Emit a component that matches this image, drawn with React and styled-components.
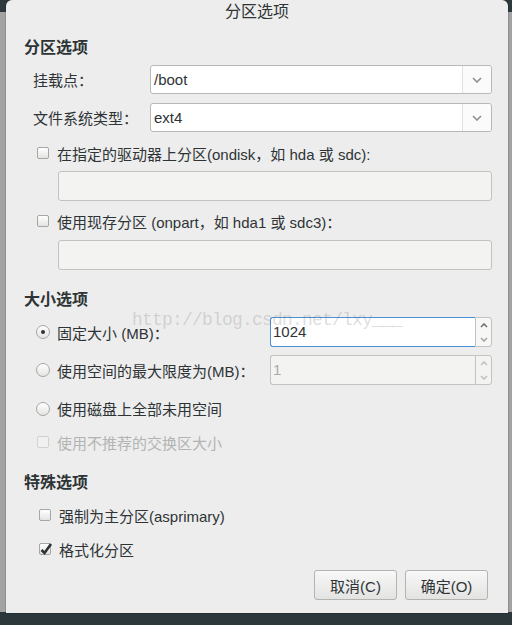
import styled, { createGlobalStyle } from "styled-components"

const colors = {
  text: "#2e3436",
  muted: "#b2b4b3",
  dialog: "#ededed",
  border: "#b8b8b5",
  focus: "#4a90d9"
}

const GlobalStyle = createGlobalStyle`
  body {
    margin: 0;
    font-family: "Liberation Sans", "Noto Sans CJK SC", sans-serif;
    font-size: 15px;
    color: ${colors.text};
  }
`

const Screen = styled.div`
  width: 512px;
  height: 625px;
  overflow: hidden;
  box-sizing: border-box;
  padding-left: 6px;
  background: linear-gradient(
    to bottom,
    #2c3a3d 0,
    #2c3a3d 12px,
    #a3a3a3 12px,
    #a3a3a3 612px,
    #2b373a 612px
  );
`

const Dialog = styled.div`
  width: 502px;
  height: 613px;
  display: flex;
  flex-direction: column;
  background: ${colors.dialog};
  border-radius: 6px 6px 0 0;
  box-shadow: 0 0 0 1px rgba(0, 0, 0, 0.12);
`

const TitleBar = styled.div`
  height: 24px;
  line-height: 24px;
  text-align: center;
  font-size: 16px;
`

const Body = styled.div`
  display: flex;
  flex-direction: column;
  padding: 14px 16px 13px 18px;
`

const Heading = styled.div`
  height: 20px;
  line-height: 20px;
  font-size: 16px;
  font-weight: bold;
  margin-top: ${(p) => p.$top || 0}px;
`

const FieldRow = styled.div`
  display: grid;
  grid-template-columns: 126px 1fr;
  align-items: center;
  margin-top: ${(p) => p.$top}px;

  label {
    padding-left: 9px;
  }
`

const Combo = styled.div`
  height: 29px;
  box-sizing: border-box;
  display: flex;
  border: 1px solid ${colors.border};
  border-radius: 3px;
  background: #fff;
`

const ComboText = styled.div`
  flex: 1;
  padding-left: 3px;
  line-height: 27px;
`

const ComboButton = styled.div`
  width: 28px;
  display: flex;
  align-items: center;
  justify-content: center;
  border-left: 1px solid #e2e2e0;
  background: #fbfbfb;
  border-radius: 0 3px 3px 0;
`

const CheckRow = styled.div`
  height: 20px;
  display: flex;
  align-items: center;
  gap: 8px;
  padding-left: ${(p) => p.$indent || 13}px;
  margin-top: ${(p) => p.$top}px;
  color: ${(p) => (p.$disabled ? colors.muted : colors.text)};
`

const Box = styled.span`
  position: relative;
  width: 12px;
  height: 12px;
  box-sizing: border-box;
  flex-shrink: 0;
  border: 1px solid ${(p) => (p.$disabled ? "#d2d2d0" : "#a6a6a4")};
  border-radius: 2px;
  background: ${(p) =>
    p.$disabled ? "#f0f0f0" : "linear-gradient(#ffffff, #e4e4e2)"};

  svg {
    position: absolute;
    left: -1px;
    top: -3px;
  }
`

const Entry = styled.div`
  height: 30px;
  box-sizing: border-box;
  margin-left: 34px;
  margin-top: ${(p) => p.$top}px;
  border: 1px solid #c2c2bf;
  border-radius: 3px;
  background: #f3f3f2;
`

const SizeSection = styled.div`
  position: relative;
  display: flex;
  flex-direction: column;
`

const RadioRow = styled.div`
  display: grid;
  grid-template-columns: 246px 1fr;
  align-items: center;
  height: ${(p) => p.$height || 30}px;
  margin-top: ${(p) => p.$top}px;
`

const RadioLabel = styled.div`
  display: flex;
  align-items: center;
  gap: 7px;
  padding-left: 12px;
`

const Radio = styled.span`
  width: 14px;
  height: 14px;
  box-sizing: border-box;
  flex-shrink: 0;
  border: 1px solid #a6a6a4;
  border-radius: 50%;
  background: linear-gradient(#ffffff, #e4e4e2);
  display: flex;
  align-items: center;
  justify-content: center;

  &::after {
    content: "";
    width: 4px;
    height: 4px;
    border-radius: 50%;
    background: ${(p) => (p.$on ? colors.text : "transparent")};
  }
`

const Spin = styled.div`
  height: 30px;
  display: flex;
`

const SpinEntry = styled.div`
  flex: 1;
  box-sizing: border-box;
  padding-left: 2px;
  line-height: 28px;
  border: 1px solid ${(p) => (p.$focused ? colors.focus : "#c2c2bf")};
  border-right: none;
  border-radius: 3px 0 0 3px;
  background: ${(p) => (p.$disabled ? "#f3f3f2" : "#fff")};
  color: ${(p) => (p.$disabled ? "#a9abaa" : colors.text)};
`

const SpinButtons = styled.div`
  width: 17px;
  box-sizing: border-box;
  display: flex;
  flex-direction: column;
  border: 1px solid #c2c2bf;
  border-radius: 0 3px 3px 0;
  background: ${(p) => (p.$disabled ? "#f3f3f2" : "#f7f7f6")};

  span {
    flex: 1;
    display: flex;
    align-items: center;
    justify-content: center;
  }
`

// csdn watermark lying over the size fields
const Watermark = styled.div`
  position: absolute;
  left: 108px;
  top: 40px;
  font-family: "Liberation Mono", monospace;
  font-size: 18px;
  letter-spacing: -0.8px;
  color: rgba(110, 110, 110, 0.24);
  pointer-events: none;
  white-space: nowrap;
`

const ButtonRow = styled.div`
  display: flex;
  justify-content: flex-end;
  gap: 8px;
  padding-right: 4px;
  margin-top: 11px;
`

const Button = styled.div`
  width: 83px;
  height: 30px;
  box-sizing: border-box;
  display: flex;
  align-items: center;
  justify-content: center;
  border: 1px solid #b3b3b0;
  border-radius: 3px;
  background: linear-gradient(#f8f8f8, #e3e3e2);
`

function Chevron({ up, color = "#8d9091", w = 10, h = 6 }) {
  const pts = up
    ? `1,${h - 1} ${w / 2},1 ${w - 1},${h - 1}`
    : `1,1 ${w / 2},${h - 1} ${w - 1},1`
  return (
    <svg width={w} height={h} viewBox={`0 0 ${w} ${h}`}>
      <polyline points={pts} fill="none" stroke={color} strokeWidth="1.6" />
    </svg>
  )
}

function CheckMark() {
  return (
    <svg width="14" height="15" viewBox="0 0 14 15">
      <path
        d="M2.5 9 L5.5 12 L12 3"
        fill="none"
        stroke={colors.text}
        strokeWidth="2.6"
      />
    </svg>
  )
}

function Check({ label, checked, disabled, indent, top }) {
  return (
    <CheckRow $indent={indent} $top={top} $disabled={disabled}>
      <Box $disabled={disabled}>{checked && <CheckMark />}</Box>
      <span>{label}</span>
    </CheckRow>
  )
}

function SpinField({ value, focused, disabled }) {
  const arrow = disabled ? "#c0c2c1" : "#6e7172"
  return (
    <Spin>
      <SpinEntry $focused={focused} $disabled={disabled}>
        {value}
      </SpinEntry>
      <SpinButtons $disabled={disabled}>
        <span>
          <Chevron up w={8} h={5} color={arrow} />
        </span>
        <span>
          <Chevron w={8} h={5} color={disabled ? arrow : "#a4a6a6"} />
        </span>
      </SpinButtons>
    </Spin>
  )
}

export default function App() {
  return (
    <Screen>
      <GlobalStyle />
      <Dialog>
        <TitleBar>分区选项</TitleBar>
        <Body>
          <Heading>分区选项</Heading>
          <FieldRow $top={7}>
            <label>挂载点：</label>
            <Combo>
              <ComboText>/boot</ComboText>
              <ComboButton>
                <Chevron />
              </ComboButton>
            </Combo>
          </FieldRow>
          <FieldRow $top={9}>
            <label>文件系统类型：</label>
            <Combo>
              <ComboText>ext4</ComboText>
              <ComboButton>
                <Chevron />
              </ComboButton>
            </Combo>
          </FieldRow>
          <Check top={11} label="在指定的驱动器上分区(ondisk，如 hda 或 sdc):" />
          <Entry $top={8} />
          <Check top={10} label="使用现存分区 (onpart，如 hda1 或 sdc3)：" />
          <Entry $top={9} />

          <SizeSection>
            <Heading $top={20}>大小选项</Heading>
            <RadioRow $top={7}>
              <RadioLabel>
                <Radio $on />
                固定大小 (MB)：
              </RadioLabel>
              <SpinField value="1024" focused />
            </RadioRow>
            <RadioRow $top={8}>
              <RadioLabel>
                <Radio />
                使用空间的最大限度为(MB)：
              </RadioLabel>
              <SpinField value="1" disabled />
            </RadioRow>
            <RadioRow $top={13} $height={20}>
              <RadioLabel>
                <Radio />
                使用磁盘上全部未用空间
              </RadioLabel>
            </RadioRow>
            <Check top={14} disabled label="使用不推荐的交换区大小" />
            <Watermark>http://blog.csdn.net/lxy___</Watermark>
          </SizeSection>

          <Heading $top={21}>特殊选项</Heading>
          <Check top={12} indent={15} label="强制为主分区(asprimary)" />
          <Check top={14} indent={15} checked label="格式化分区" />

          <ButtonRow>
            <Button>取消(C)</Button>
            <Button>确定(O)</Button>
          </ButtonRow>
        </Body>
      </Dialog>
    </Screen>
  )
}
